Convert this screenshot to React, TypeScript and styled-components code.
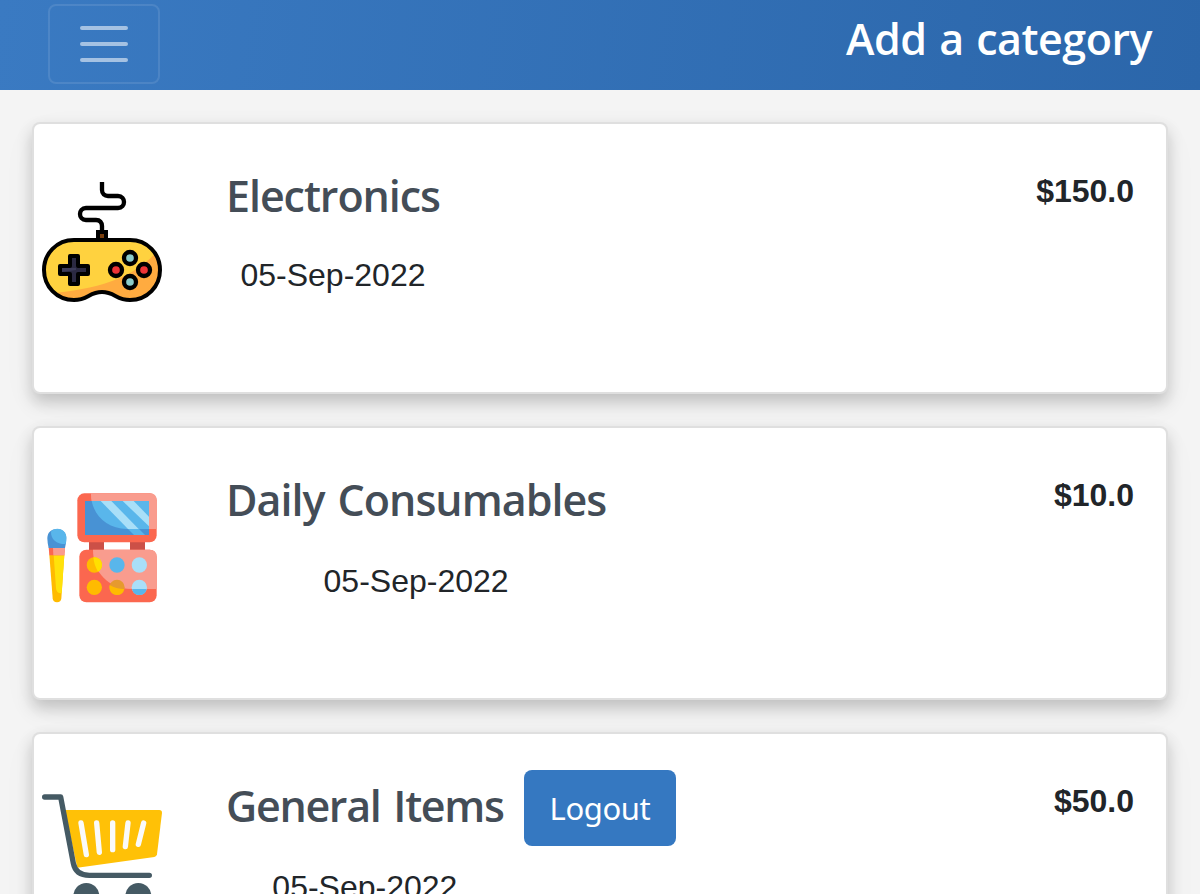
import React from "react";
import styled, { createGlobalStyle } from "styled-components";

const GlobalStyle = createGlobalStyle`
  *, *::before, *::after { box-sizing: border-box; }
  html, body { margin: 0; height: 100%; overflow: hidden; }
  body { background: #f4f4f4; color: #212529; font-family: "Liberation Sans", Arial, sans-serif; }
`;

const Page = styled.div`
  position: relative;
  height: 894px;
  overflow: hidden;
  background: #f4f4f4;
`;

const Header = styled.header`
  display: flex;
  justify-content: space-between;
  align-items: flex-start;
  height: 90px;
  padding: 4px 48px 0;
  background: linear-gradient(98deg, #3a7ac2 0%, #2b66aa 100%);
`;

const MenuButton = styled.button`
  display: flex;
  flex-direction: column;
  align-items: center;
  justify-content: center;
  gap: 12px;
  width: 112px;
  height: 80px;
  padding: 0;
  border: 2px solid rgba(255, 255, 255, 0.1);
  border-radius: 8px;
  background: transparent;
`;

const MenuBar = styled.span`
  width: 48px;
  height: 4px;
  border-radius: 2px;
  background: rgba(255, 255, 255, 0.55);
`;

const HeaderTitle = styled.h1`
  margin: 5px 0 0;
  font: 590 43px/60px "Open Sans", "Noto Sans", sans-serif;
  letter-spacing: -0.5px;
  word-spacing: 2px;
  color: #fff;
`;

const CardList = styled.main`
  display: flex;
  flex-direction: column;
  gap: 32px;
  padding: 32px;
`;

const Card = styled.article<{ $height: number; $top: number }>`
  display: flex;
  flex-shrink: 0;
  align-items: flex-start;
  height: ${(p) => p.$height}px;
  padding: 0 32px 0 8px;
  border: 2px solid rgba(0, 0, 0, 0.125);
  border-radius: 8px;
  background: #fff;
  box-shadow: 0 8px 16px rgba(0, 0, 0, 0.2), 0 12px 40px rgba(0, 0, 0, 0.03);

  > svg {
    flex: none;
    margin-top: ${(p) => p.$top}px;
  }
`;

const Details = styled.div`
  display: flex;
  flex-direction: column;
  align-items: center;
  margin: 42px 0 0 64px;
`;

const Name = styled.h2<{ $spacing: number }>`
  margin: 0;
  font: 580 43px/60px "Open Sans", "Noto Sans", sans-serif;
  letter-spacing: ${(p) => p.$spacing}px;
  word-spacing: 3px;
  white-space: nowrap;
  color: #444d57;
`;

const DateText = styled.p<{ $gap: number }>`
  margin: ${(p) => p.$gap}px 0 0;
  font-size: 32px;
  line-height: 48px;
`;

const Price = styled.strong`
  margin: 43px 0 0 auto;
  font-size: 32px;
  line-height: 48px;
`;

const LogoutButton = styled.button`
  position: absolute;
  left: 524px;
  top: 770px;
  width: 152px;
  height: 76px;
  padding: 0;
  border: 0;
  border-radius: 8px;
  background: #3578c1;
  color: #fff;
  font: 400 31px/44px "Noto Sans", "Open Sans", sans-serif;
  letter-spacing: -0.4px;
`;

const GamepadIcon = () => (
  <svg width="120" height="120" viewBox="36 36 360 360" fill="none">
    <path
      d="M132 210H300C352 210 390 251 390 300S352 390 300 390C258 390 255 366 216 366S174 390 132 390C80 390 42 349 42 300S80 210 132 210Z"
      fill="#ffd23f"
    />
    <path
      d="M376 250C390 275 391 300 388 316C379 358 345 390 300 390C258 390 255 366 216 366S174 390 132 390C108 390 91 380 78 368C230 354 318 312 376 250Z"
      fill="#ffab40"
    />
    <path
      d="M132 210H300C352 210 390 251 390 300S352 390 300 390C258 390 255 366 216 366S174 390 132 390C80 390 42 349 42 300S80 210 132 210Z"
      stroke="#000"
      strokeWidth="12"
    />
    <path
      d="M216 36V60C216 72 224 78 234 78H264C288 78 288 114 264 114H168C144 114 144 150 168 150H198C210 150 216 158 216 168V184"
      stroke="#000"
      strokeWidth="13"
    />
    <path d="M198 180H234V208H198Z" fill="#000" />
    <path d="M210 192H222V204H210Z" fill="#7b3f0e" />
    <path
      d="M120 258H144V288H174V312H144V342H120V312H90V288H120Z"
      fill="#2b2942"
      stroke="#000"
      strokeWidth="12"
      strokeLinejoin="round"
    />
    <path d="M96 294H138V300L96 306Z" fill="#3c3b59" />
    <g stroke="#000" strokeWidth="13">
      <circle cx="300" cy="264" r="18" fill="#8cccca" />
      <circle cx="300" cy="336" r="18" fill="#8cccca" />
      <circle cx="258" cy="300" r="18" fill="#ee3436" />
      <circle cx="342" cy="300" r="18" fill="#ee3436" />
    </g>
  </svg>
);

const MakeupIcon = () => (
  <svg width="120" height="120" viewBox="36 24 360 360" fill="none">
    <path d="M177 184H222V212H177ZM300 184H345V212H300Z" fill="#cc5047" />
    <rect x="142" y="40" width="238" height="147" rx="21" fill="#fb674f" />
    <path d="M183 40H359Q380 40 380 61V147H290C220 145 181 98 183 40Z" fill="#f99c8e" />
    <path d="M165 63H357V165H165Z" fill="#4892d4" />
    <path d="M185 63H357V147H290C235 145 195 112 185 63Z" fill="#59b6eb" />
    <path d="M212 63H244L326 147H294Z" fill="#a9dff8" />
    <path d="M294 147H327L345 165H312Z" fill="#59b6eb" />
    <path d="M278 63H311L357 110V139Z" fill="#a9dff8" />
    <rect x="148" y="209" width="232" height="158" rx="21" fill="#fb674f" />
    <path d="M189 209H359Q380 209 380 230V327H305C235 325 189 278 189 209Z" fill="#f99c8e" />
    <circle cx="193" cy="255" r="23" fill="#ffbb00" />
    <path d="M190 232C207 230 216 242 216 255Q216 269 204 275Q192 255 190 232Z" fill="#ffe000" />
    <circle cx="261" cy="255" r="23" fill="#59b6eb" />
    <circle cx="328" cy="255" r="23" fill="#a9dff8" />
    <circle cx="193" cy="322" r="23" fill="#ffbb00" />
    <circle cx="261" cy="322" r="23" fill="#e69a2e" />
    <path d="M239 315Q258 327 283 327Q279 345 261 345C243 345 236 329 239 315Z" fill="#ffbb00" />
    <circle cx="328" cy="322" r="23" fill="#a9dff8" />
    <path d="M306 327H350Q346 345 328 345T306 327Z" fill="#59b6eb" />
    <path d="M58 224H103L94 355Q93 367 81 367T68 355Z" fill="#ffbb00" />
    <path d="M71 224H103L95 340Q79 341 78 325Z" fill="#ffe20a" />
    <path d="M56 202H105L103 226H58Z" fill="#fb674f" />
    <path d="M69 202H105L103 226H70Z" fill="#f99c8e" />
    <path d="M56 204Q52 188 52 174C52 138 109 138 109 174Q109 188 105 204Z" fill="#4892d4" />
    <path d="M63 155C77 139 109 146 109 174Q109 184 107 192C81 193 62 178 63 155Z" fill="#59b6eb" />
  </svg>
);

const CartIcon = () => (
  <svg width="120" height="120" viewBox="36 60 360 360" fill="none">
    <path d="M104 108H388Q396 108 396 116L381 241Q380 248 373 249L142 281Z" fill="#ffc107" />
    <path
      d="M153 147L169 242M200 147L208 235M248 147V227M294 147L286 218M341 147L325 211"
      stroke="#fafafa"
      strokeWidth="16"
      strokeLinecap="round"
    />
    <path
      d="M44 69H92L130 268Q137 304 178 304H358"
      stroke="#455a64"
      strokeWidth="16"
      strokeLinecap="round"
      strokeLinejoin="round"
    />
    <circle cx="169" cy="366" r="39" fill="#455a64" />
    <circle cx="325" cy="366" r="39" fill="#455a64" />
  </svg>
);

const categories = [
  { name: "Electronics", price: "$150.0", Icon: GamepadIcon, height: 272, top: 58, gap: 25, spacing: -1.05 },
  { name: "Daily Consumables", price: "$10.0", Icon: MakeupIcon, height: 274, top: 60, gap: 27, spacing: -1 },
  { name: "General Items", price: "$50.0", Icon: CartIcon, height: 274, top: 60, gap: 27, spacing: -1.3 },
];

export default function App() {
  return (
    <>
      <GlobalStyle />
      <Page>
        <Header>
          <MenuButton aria-label="Toggle navigation">
            <MenuBar />
            <MenuBar />
            <MenuBar />
          </MenuButton>
          <HeaderTitle>Add a category</HeaderTitle>
        </Header>
        <CardList>
          {categories.map(({ name, price, Icon, height, top, gap, spacing }) => (
            <Card key={name} $height={height} $top={top}>
              <Icon />
              <Details>
                <Name $spacing={spacing}>{name}</Name>
                <DateText $gap={gap}>05-Sep-2022</DateText>
              </Details>
              <Price>{price}</Price>
            </Card>
          ))}
        </CardList>
        <LogoutButton>Logout</LogoutButton>
      </Page>
    </>
  );
}
